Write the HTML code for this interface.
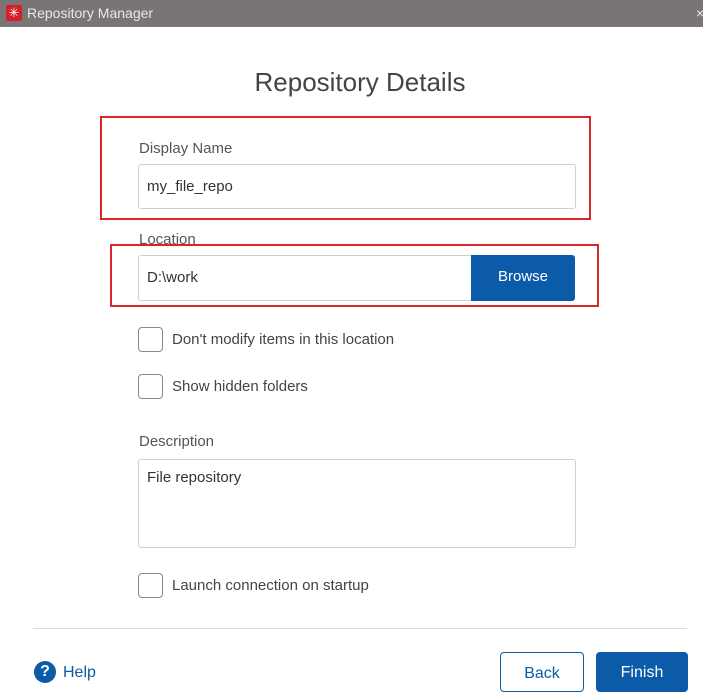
<!DOCTYPE html>
<html><head><style>
body{margin:0;width:703px;height:681px;overflow:hidden;background:#fff;font-family:"Liberation Sans",sans-serif;position:relative;color:#444}
.a{position:absolute}
.tb{left:0;top:0;width:703px;height:27px;background:#7a7574;color:#e8e8e8;font-size:14px}
.in{border:1px solid #cfcfcf;border-radius:3px;background:#fff;box-sizing:border-box;font-size:15px;color:#333;padding-left:8px}
.lbl{font-size:15px;color:#555}
.cb{width:25px;height:25px;border:1px solid #888;border-radius:4px;box-sizing:border-box}
.red{border:2px solid #d9262c;box-sizing:border-box}
</style></head><body>
<div class="a tb"><div class="a" style="left:6px;top:5px;width:16px;height:16px;background:#d3202a;border-radius:2px;color:#fff;font-size:13px;line-height:16px;text-align:center">✳</div><div class="a" style="left:27px;top:5px">Repository Manager</div><div class="a" style="left:696px;top:5px">×</div></div>
<div class="a" style="left:0;top:67px;width:720px;text-align:center;font-size:26px;color:#444">Repository Details</div>
<div class="a red" style="left:100px;top:116px;width:491px;height:104px"></div>
<div class="a lbl" style="left:139px;top:140px">Display Name</div>
<div class="a in" style="left:138px;top:164px;width:438px;height:45px;line-height:43px">my_file_repo</div>
<div class="a lbl" style="left:139px;top:231px">Location</div>
<div class="a red" style="left:110px;top:244px;width:489px;height:63px"></div>
<div class="a in" style="left:138px;top:255px;width:338px;height:46px;line-height:44px">D:\work</div>
<div class="a" style="left:471px;top:255px;width:104px;height:46px;background:#0b5ba9;border-radius:0 3px 3px 0;color:#fff;font-size:15px;line-height:44px;text-align:center">Browse</div>
<div class="a cb" style="left:138px;top:327px"></div>
<div class="a lbl" style="left:172px;top:331px;color:#444">Don't modify items in this location</div>
<div class="a cb" style="left:138px;top:374px"></div>
<div class="a lbl" style="left:172px;top:378px;color:#444">Show hidden folders</div>
<div class="a lbl" style="left:139px;top:433px">Description</div>
<div class="a in" style="left:138px;top:459px;width:438px;height:89px;padding-top:9px">File repository</div>
<div class="a cb" style="left:138px;top:573px"></div>
<div class="a lbl" style="left:172px;top:577px;color:#444">Launch connection on startup</div>
<div class="a" style="left:33px;top:628px;width:654px;height:1px;background:#ddd"></div>
<div class="a" style="left:34px;top:661px;width:22px;height:22px;border-radius:50%;background:#0b5ba9;color:#fff;font-weight:bold;font-size:16px;line-height:22px;text-align:center">?</div>
<div class="a" style="left:63px;top:664px;font-size:16px;color:#0b5ba9">Help</div>
<div class="a" style="left:500px;top:652px;width:84px;height:40px;border:1px solid #0b5ba9;border-radius:4px;box-sizing:border-box;color:#0b5ba9;font-size:16px;text-align:center;line-height:42px">Back</div>
<div class="a" style="left:596px;top:652px;width:92px;height:40px;background:#0b5ba9;border-radius:4px;color:#fff;font-size:16px;text-align:center;line-height:42px">Finish</div>
</body></html>
